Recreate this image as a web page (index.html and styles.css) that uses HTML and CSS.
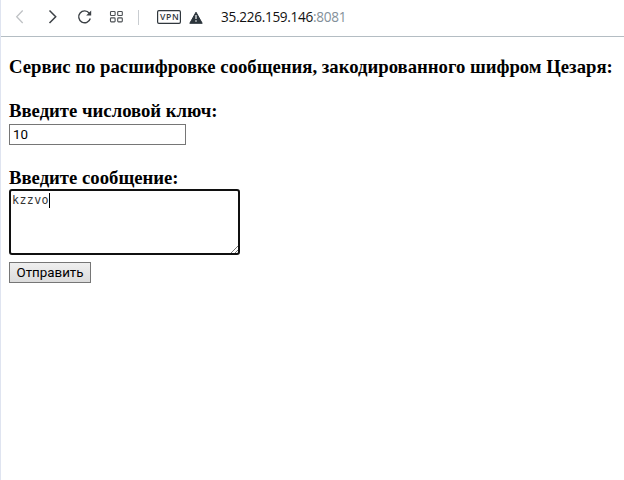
FILE: index.html
```html
<!DOCTYPE html>
<html lang="ru">
<head>
<meta charset="utf-8">
<title>Шифр Цезаря</title>
<link rel="stylesheet" href="styles.css">
</head>
<body>
<div class="window">
  <header class="toolbar">
    <svg class="icons" width="210" height="36" viewBox="0 0 210 36" fill="none">
      <path d="M21.7 10.5 15.7 16.8l6 6.2" stroke="#bfc2c5" stroke-width="1.3"/>
      <path d="M48.5 10.5l6.2 6.3-6.2 6.2" stroke="#3c4146" stroke-width="1.5"/>
      <path d="M88.3 13.2A5.9 5.9 0 1 0 89.3 18.5" stroke="#3c4146" stroke-width="1.4"/>
      <path d="M90.2 10.5v5h-5z" fill="#3c4146"/>
      <g stroke="#4b4f53" stroke-width="1.1">
        <rect x="109.5" y="11.5" width="4.6" height="4" rx=".8"/>
        <rect x="116.7" y="11.5" width="4.6" height="4" rx=".8"/>
        <rect x="109.5" y="17.9" width="4.6" height="4" rx=".8"/>
        <rect x="116.7" y="17.9" width="4.6" height="4" rx=".8"/>
      </g>
      <path d="M137.5 10v15" stroke="#c9cdd1"/>
      <rect x="156.6" y="10.6" width="22.8" height="12.8" rx="1.3" stroke="#30373d" stroke-width="1.2"/>
      <text class="vpn" x="158.9" y="20" textLength="18.8">VPN</text>
      <path d="M195 12.2 201.2 23.3H188.8z" fill="#2b343b" stroke="#2b343b" stroke-linejoin="round"/>
      <path d="M195 15v4M195 20.2v1.6" stroke="#d9dcde" stroke-width="1.4"/>
    </svg>
    <div class="address">35.226.159.146<span class="port">:8081</span></div>
  </header>
  <main class="page">
    <h3 class="title">Сервис по расшифровке сообщения, закодированного шифром Цезаря:</h3>
    <form class="form">
      <label class="label" for="key">Введите числовой ключ:</label>
      <input class="key" id="key" type="text" value="10">
      <div class="label message-label">Введите сообщение:</div>
      <div class="message"><span class="value">kzzvo</span><span class="caret"></span>
        <svg class="grip" width="8" height="8" viewBox="0 0 8 8"><path d="M1 8 8 1M5 8l3-3" stroke="#777"/></svg>
      </div>
      <button class="submit" type="button">Отправить</button>
    </form>
  </main>
</div>
</body>
</html>
```
FILE: styles.css
```css
body {
  margin: 0;
  background: #fff;
}
.window {
  box-sizing: border-box;
  height: 480px;
  border-left: 1px solid #dfe4f0;
  overflow: hidden;
}
.toolbar {
  display: flex;
  height: 36px;
  border-bottom: 1px solid #b4bdc3;
}
.icons {
  flex: none;
}
.vpn {
  font: 600 8.6px "Open Sans", sans-serif;
  fill: #30373d;
}
.address {
  padding-left: 10px;
  font: 13.6px/34px "Open Sans", sans-serif;
  letter-spacing: -0.3px;
  color: #111;
  white-space: nowrap;
}
.port {
  color: #84909a;
}
.page {
  padding: 19px 0 0 8px;
  font-family: "Liberation Serif", serif;
  color: #000;
}
.title,
.label {
  margin: 0;
  font-size: 18.72px;
  font-weight: 700;
  line-height: 22px;
  white-space: nowrap;
}
.form {
  display: flex;
  flex-direction: column;
  align-items: flex-start;
  margin-top: 22px;
}
.key {
  box-sizing: border-box;
  width: 177px;
  height: 21px;
  margin: 2px 0 0;
  padding: 1px 3px;
  border: 1px solid #767676;
  font: 13.33px Roboto, sans-serif;
  color: #000;
}
.message-label {
  margin-top: 22px;
}
.message {
  position: relative;
  box-sizing: border-box;
  display: flex;
  width: 231px;
  height: 66px;
  padding: 1px 1px;
  border: 2px solid #101010;
  border-radius: 3px;
  font: 11.6px/17px "DejaVu Sans Mono", monospace;
  letter-spacing: 0.42px;
  color: #333;
}
.caret {
  width: 1px;
  height: 15px;
  margin-top: 1px;
  background: #000;
}
.grip {
  position: absolute;
  right: 0;
  bottom: 0;
}
.submit {
  box-sizing: border-box;
  width: 82px;
  height: 21px;
  margin: 7px 0 0;
  padding: 0;
  border: 1px solid #767676;
  background: linear-gradient(#efefef, #dcdcdc);
  font: 13.33px/18px Roboto, sans-serif;
  color: #000;
}
```
